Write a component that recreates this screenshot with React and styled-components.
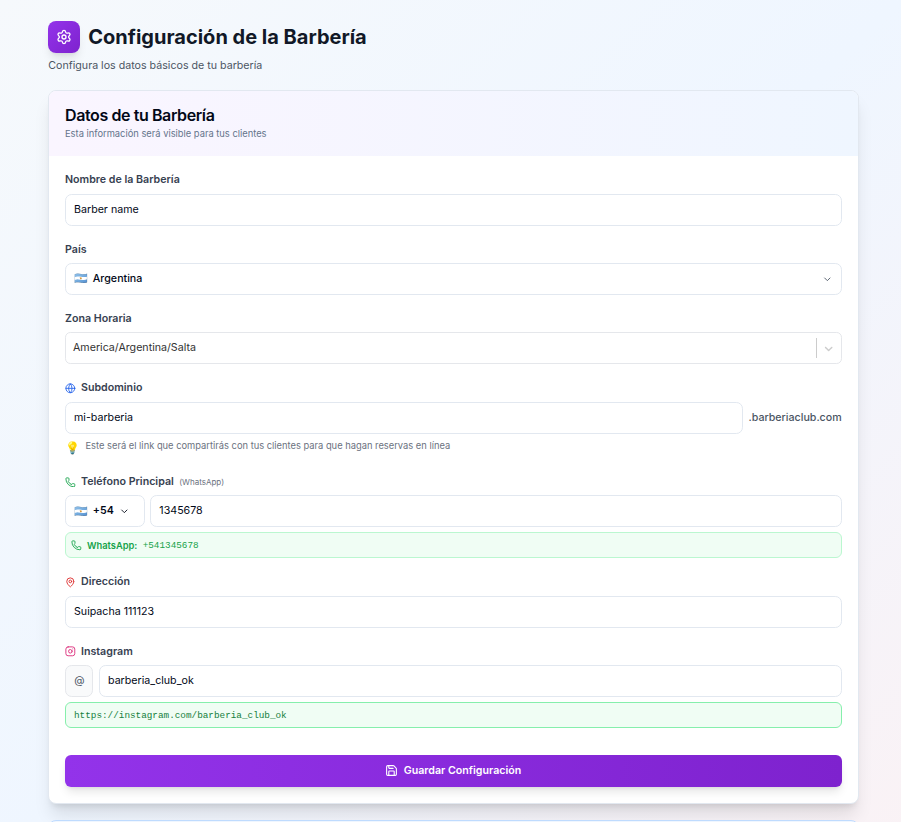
import React from 'react';
import styled, { createGlobalStyle } from 'styled-components';
import {
	ChevronDown,
	Globe,
	Instagram,
	MapPin,
	Phone,
	Save,
	Settings,
} from 'lucide-react';

const GlobalStyle = createGlobalStyle`
	* {
		box-sizing: border-box;
	}
	body {
		margin: 0;
		overflow: hidden;
		font-family: Inter, 'Liberation Sans', sans-serif;
	}
`;

const Page = styled.div`
	height: 822px;
	overflow: hidden;
	padding: 21px 42.33px 0 48px;
	background: linear-gradient(to bottom right, #f6f9fc, #eff6ff 50%, #faf2f5)
		0 0 / 100% 860px no-repeat;
`;

const Header = styled.header`
	height: 69.33px;
`;

const TitleRow = styled.div`
	display: flex;
	align-items: center;
	gap: 8.3px;
`;

const Logo = styled.div`
	display: flex;
	align-items: center;
	justify-content: center;
	width: 32px;
	height: 32px;
	border-radius: 8px;
	color: #fff;
	background: linear-gradient(to bottom right, #9333ea, #7e22ce);
	box-shadow: 0 7px 10px -2px rgba(0, 0, 0, 0.1),
		0 3px 4px -3px rgba(0, 0, 0, 0.1);
`;

const Title = styled.h1`
	margin: 0;
	font-size: 20px;
	line-height: 24px;
	font-weight: 700;
	color: #111827;
`;

const Subtitle = styled.p`
	margin: 5px 0 0 0.3px;
	font-size: 10.67px;
	line-height: 16px;
	color: #4b5563;
`;

const Card = styled.section`
	height: 713.33px;
	border: 1px solid #e2e8f0;
	border-radius: 8px;
	background: #fff;
	overflow: hidden;
	box-shadow: 0 13.33px 16.67px -3.33px rgba(0, 0, 0, 0.1),
		0 5.33px 6.67px -4px rgba(0, 0, 0, 0.1);
`;

const CardHeader = styled.div`
	height: 64.67px;
	padding: 14.33px 16px;
	background: linear-gradient(to right, #faf5ff, #eff6ff);
`;

const CardTitle = styled.h2`
	margin: 0;
	font-size: 16px;
	line-height: 19px;
	font-weight: 600;
	letter-spacing: -0.4px;
	color: #020817;
`;

const CardText = styled.p`
	margin: 2px 0 0;
	font-size: 9.33px;
	line-height: 13.33px;
	color: #64748b;
`;

const Form = styled.div`
	display: flex;
	flex-direction: column;
	gap: 14.67px;
	padding: 15px 16px 16px;
`;

const Label = styled.div`
	display: flex;
	align-items: center;
	gap: 5.33px;
	height: 17.45px;
	margin-bottom: 5.22px;
	padding-top: 1.45px;
	font-size: 10.67px;
	line-height: 16px;
	font-weight: 600;
	color: #374151;
	svg {
		color: ${(props) => props.$icon};
	}
`;

const Muted = styled.span`
	font-size: 8px;
	font-weight: 400;
	color: #6b7280;
`;

const Row = styled.div`
	display: flex;
	align-items: center;
	gap: ${(props) => props.$gap || 5.33}px;
`;

const Control = styled.div`
	display: flex;
	align-items: center;
	flex: 1;
	height: 32px;
	padding: 0 8px ${(props) => props.$lift || 1}px 8px;
	border: 1px solid ${(props) => props.$border || '#e2e8f0'};
	border-radius: ${(props) => props.$radius || 6.67}px;
	background: #fff;
	font-size: 10.67px;
	font-weight: ${(props) => props.$weight || 400};
	color: ${(props) => props.$color || '#020817'};
`;

const Dial = styled(Control)`
	flex: none;
	width: 80px;
	font-weight: 600;
	svg {
		margin: 2px 0 0 5px;
	}
`;

const At = styled(Control)`
	flex: none;
	width: 28px;
	padding: 0 0 1px 0.6px;
	justify-content: center;
	background: #f9fafb;
	border-color: #e5e7eb;
	color: #4b5563;
`;

const Flag = styled.span`
	width: 14px;
	margin-right: 4.8px;
	font-size: 11px;
	font-weight: 400;
	white-space: nowrap;
`;

const Arrow = styled.span`
	display: flex;
	align-items: center;
	height: 20px;
	margin: 1px 0 0 auto;
	color: #4b5563;
`;

const DividedArrow = styled(Arrow)`
	margin: 2px -3px 0 auto;
	padding-left: 5px;
	border-left: 1px solid #ccc;
	color: #ccc;
`;

const Zone = styled.span`
	margin-left: -1px;
`;

const Domain = styled.span`
	padding-bottom: 1px;
	font-size: 10.67px;
	font-weight: 500;
	color: #4b5563;
`;

const Hint = styled.div`
	display: flex;
	gap: 6.5px;
	height: 24.33px;
	padding-top: 5px;
	font-size: 9.33px;
	line-height: 14px;
	color: #6b7280;
`;

const Bulb = styled.span`
	width: 14px;
	font-size: 12px;
	line-height: 18px;
`;

const Notice = styled.div`
	display: flex;
	align-items: center;
	gap: 5.33px;
	height: 26px;
	margin-top: 5px;
	padding: ${(props) => props.$drop || 0}px ${(props) => props.$pad}px 0;
	border: 1px solid ${(props) => props.$border};
	border-radius: 6px;
	background: #f0fdf4;
	font-size: 9.33px;
	font-weight: 600;
	color: ${(props) => props.$color};
`;

const Mono = styled.span`
	font-family: 'Liberation Mono', monospace;
	font-weight: 400;
`;

const SaveButton = styled.button`
	display: flex;
	align-items: center;
	justify-content: center;
	gap: 5.33px;
	width: 100%;
	height: 32px;
	margin-top: 12.5px;
	padding: 0 0 1px;
	border: 0;
	border-radius: 6px;
	background: linear-gradient(to right, #9333ea, #7e22ce);
	color: #fff;
	font-family: inherit;
	font-size: 10.67px;
	font-weight: 600;
	box-shadow: 0 6.67px 10px -2px rgba(0, 0, 0, 0.1),
		0 2.67px 4px -2.67px rgba(0, 0, 0, 0.1);
`;

const NextCard = styled.section`
	height: 80px;
	margin-top: 16px;
	border: 1px solid #bfdbfe;
	border-radius: 8px;
	background: #eff6ff;
`;

const SolidChevron = () => (
	<svg width='13.33' height='13.33' viewBox='0 0 20 20' fill='currentColor'>
		<path d='M4.516 7.548c0.436-0.446 1.043-0.481 1.576 0l3.908 3.747 3.908-3.747c0.533-0.481 1.141-0.446 1.574 0 0.436 0.445 0.408 1.197 0 1.615-0.406 0.418-4.695 4.502-4.695 4.502-0.217 0.223-0.502 0.335-0.787 0.335s-0.57-0.112-0.789-0.335c0 0-4.287-4.084-4.695-4.502s-0.436-1.17 0-1.615z' />
	</svg>
);

const Field = ({ label, icon, color, note, children }) => (
	<div>
		<Label $icon={color}>
			{icon}
			{label}
			{note && <Muted>{note}</Muted>}
		</Label>
		{children}
	</div>
);

const App = () => {
	return (
		<>
			<GlobalStyle />
			<Page>
				<Header>
					<TitleRow>
						<Logo>
							<Settings size={16} />
						</Logo>
						<Title>Configuración de la Barbería</Title>
					</TitleRow>
					<Subtitle>Configura los datos básicos de tu barbería</Subtitle>
				</Header>
				<Card>
					<CardHeader>
						<CardTitle>Datos de tu Barbería</CardTitle>
						<CardText>Esta información será visible para tus clientes</CardText>
					</CardHeader>
					<Form>
						<Field label='Nombre de la Barbería'>
							<Control>Barber name</Control>
						</Field>
						<Field label='País'>
							<Control $weight={500}>
								<Flag>🇦🇷</Flag>
								Argentina
								<Arrow>
									<ChevronDown size={10.67} />
								</Arrow>
							</Control>
						</Field>
						<Field label='Zona Horaria'>
							<Control
								$border='#e5e7eb'
								$radius={5.33}
								$color='#333'
								$lift={2}
							>
								<Zone>America/Argentina/Salta</Zone>
								<DividedArrow>
									<SolidChevron />
								</DividedArrow>
							</Control>
						</Field>
						<Field label='Subdominio' icon={<Globe size={10.67} />} color='#2563eb'>
							<Row>
								<Control>mi-barberia</Control>
								<Domain>.barberiaclub.com</Domain>
							</Row>
							<Hint>
								<Bulb>💡</Bulb>
								Este será el link que compartirás con tus clientes para que hagan
								reservas en línea
							</Hint>
						</Field>
						<Field
							label='Teléfono Principal'
							icon={<Phone size={10.67} />}
							color='#16a34a'
							note='(WhatsApp)'
						>
							<Row>
								<Dial>
									<Flag>🇦🇷</Flag>
									+54
									<ChevronDown size={10.67} />
								</Dial>
								<Control>1345678</Control>
							</Row>
							<Notice $pad={5} $border='#bbf7d0' $color='#16a34a'>
								<Phone size={10.67} />
								WhatsApp:
								<Mono>+541345678</Mono>
							</Notice>
						</Field>
						<Field label='Dirección' icon={<MapPin size={10.67} />} color='#dc2626'>
							<Control>Suipacha 111123</Control>
						</Field>
						<Field label='Instagram' icon={<Instagram size={10.67} />} color='#db2777'>
							<Row $gap={6}>
								<At>@</At>
								<Control>barberia_club_ok</Control>
							</Row>
							<Notice $pad={8} $drop={1} $border='#86efac' $color='#15803d'>
								<Mono>https://instagram.com/barberia_club_ok</Mono>
							</Notice>
						</Field>
						<SaveButton>
							<Save size={13} />
							Guardar Configuración
						</SaveButton>
					</Form>
				</Card>
				<NextCard />
			</Page>
		</>
	);
};

export default App;
